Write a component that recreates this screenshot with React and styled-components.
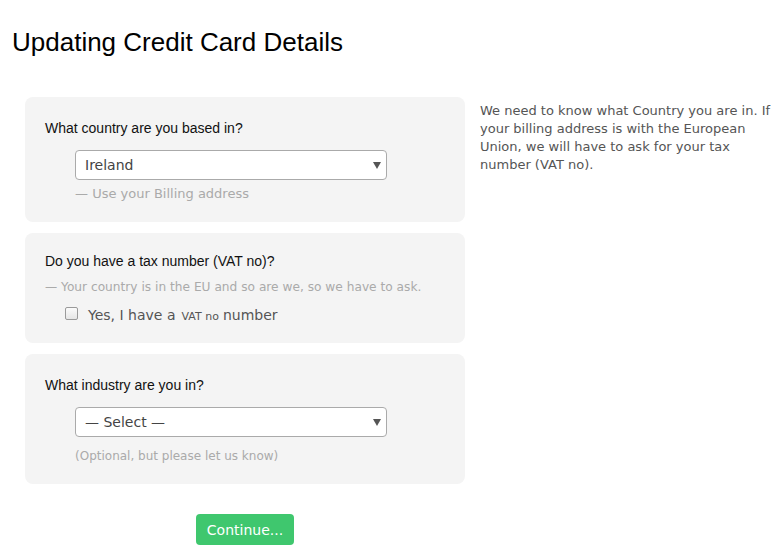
import React from "react";
import styled, { createGlobalStyle } from "styled-components";

const Global = createGlobalStyle`
  html, body { margin: 0; padding: 0; background: #fff; }
  body { font-family: "DejaVu Sans", Verdana, sans-serif; }
`;

const Page = styled.div`
  width: 784px;
  height: 555px;
  overflow: hidden;
`;

const Title = styled.h1`
  margin: 0;
  padding: 27px 0 0 12px;
  font-family: "Liberation Sans", Arial, sans-serif;
  font-weight: normal;
  font-size: 26px;
  line-height: 30px;
  color: #000;
`;

const Main = styled.div`
  display: flex;
  gap: 15px;
  margin-top: 40px;
  padding-left: 25px;
`;

const Column = styled.div`
  width: 440px;
  display: flex;
  flex-direction: column;
  gap: 11px;
`;

const Card = styled.section`
  background: #f4f4f4;
  border-radius: 8px;
  padding: ${(p) => p.$pad};
`;

const Question = styled.div`
  font-family: "Liberation Sans", Arial, sans-serif;
  font-size: 14px;
  line-height: 16px;
  color: #111;
  margin-bottom: ${(p) => p.$gap || "14px"};
`;

const Indent = styled.div`
  padding-left: 30px;
`;

const SelectWrap = styled.div`
  position: relative;
  width: 312px;
`;

const Select = styled.select`
  appearance: none;
  -webkit-appearance: none;
  display: block;
  width: 312px;
  height: 30px;
  box-sizing: border-box;
  border: 1px solid #aaa;
  border-radius: 4px;
  background: #fff;
  padding: 0 28px 0 9px;
  font-family: "DejaVu Sans", Verdana, sans-serif;
  font-size: 14px;
  color: #444;
  outline: none;
`;

const Arrow = styled.svg`
  position: absolute;
  right: 6px;
  top: 12px;
  pointer-events: none;
`;

const Hint = styled.div`
  font-size: ${(p) => p.$size || "13px"};
  line-height: 16px;
  color: #aaa;
  white-space: nowrap;
  margin-top: ${(p) => p.$top || "6px"};
`;

const CheckRow = styled.label`
  display: flex;
  align-items: center;
  gap: 10px;
  margin-top: 12px;
  padding-left: 20px;
  font-size: 14px;
  line-height: 16px;
  color: #555;
`;

const Box = styled.span`
  width: 11px;
  height: 11px;
  border: 1px solid #9a9a9a;
  border-radius: 2px;
  background: linear-gradient(#fbfbfb, #e6e6e6);
  margin-top: -6px;
`;

const Small = styled.span`
  font-size: 11px;
  margin: 0 4px 0 6px;
`;

const Side = styled.p`
  margin: 5px 0 0 0;
  width: 304px;
  font-size: 13px;
  line-height: 18px;
  color: #555;
`;

const Actions = styled.div`
  display: flex;
  justify-content: center;
  width: 440px;
  margin: 30px 0 0 25px;
`;

const Button = styled.button`
  background: #3fc76e;
  color: #fff;
  border: none;
  border-radius: 4px;
  height: 31px;
  padding: 0 11px;
  font-family: "DejaVu Sans", Verdana, sans-serif;
  font-size: 14px;
`;

function ChoiceSelect({ value }) {
  return (
    <SelectWrap>
      <Select defaultValue={value}>
        <option>{value}</option>
      </Select>
      <Arrow width="8" height="7" viewBox="0 0 8 7">
        <path d="M0 0 H8 L4 7 Z" fill="#555" />
      </Arrow>
    </SelectWrap>
  );
}

export default function App() {
  return (
    <Page>
      <Global />
      <Title>Updating Credit Card Details</Title>
      <Main>
        <Column>
          <Card $pad="23px 20px 20px 20px">
            <Question>What country are you based in?</Question>
            <Indent>
              <ChoiceSelect value="Ireland" />
              <Hint>— Use your Billing address</Hint>
            </Indent>
          </Card>
          <Card $pad="20px 20px 18px 20px">
            <Question $gap="10px">Do you have a tax number (VAT no)?</Question>
            <Hint $top="0" $size="12.2px">
              — Your country is in the EU and so are we, so we have to ask.
            </Hint>
            <CheckRow>
              <Box />
              <span>
                Yes, I have a<Small>VAT no</Small>number
              </span>
            </CheckRow>
          </Card>
          <Card $pad="23px 20px 20px 20px">
            <Question>What industry are you in?</Question>
            <Indent>
              <ChoiceSelect value="— Select —" />
              <Hint $top="11px" $size="12px">
                (Optional, but please let us know)
              </Hint>
            </Indent>
          </Card>
        </Column>
        <Side>
          We need to know what Country you are in. If your billing address is
          with the European Union, we will have to ask for your tax number (VAT
          no).
        </Side>
      </Main>
      <Actions>
        <Button>Continue...</Button>
      </Actions>
    </Page>
  );
}
